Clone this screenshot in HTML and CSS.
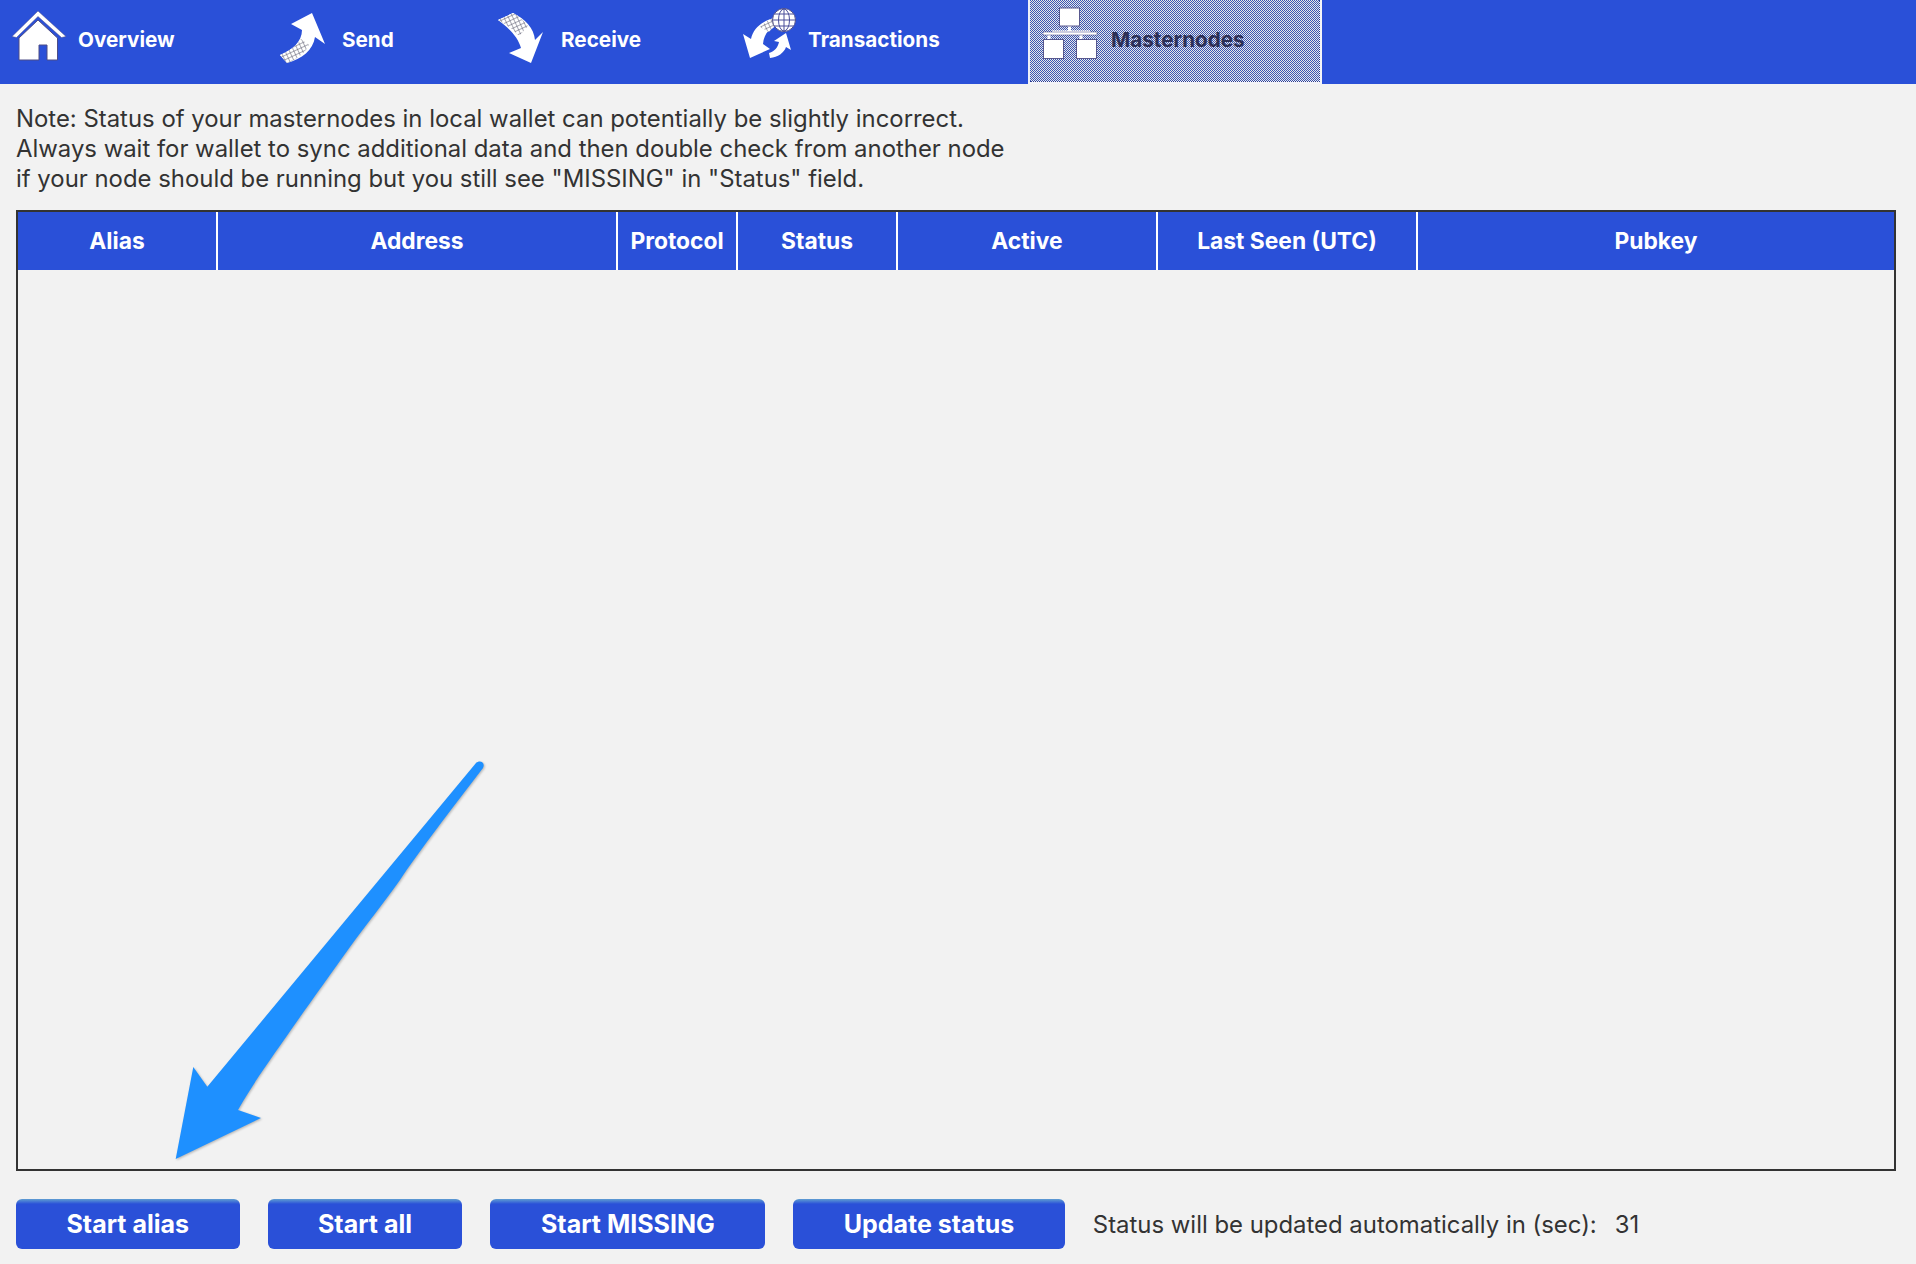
FILE: index.html
```html
<!DOCTYPE html>
<html lang="en">
<head>
<meta charset="utf-8">
<title>Masternodes</title>
<link rel="stylesheet" href="styles.css">
</head>
<body>
<svg width="0" height="0" class="defs">
  <defs>
    <pattern id="mesh" width="4" height="4" patternUnits="userSpaceOnUse" patternTransform="rotate(-25)">
      <rect width="4" height="4" fill="#fff"/>
      <path d="M0 0H4M0 0V4" stroke="#55556a" stroke-width="1"/>
    </pattern>
  </defs>
</svg>
<nav class="toolbar">
  <div class="tab">
    <svg class="icon icon-overview" viewBox="0 0 54 50">
      <path d="M26 0L54 25.5L49.5 26.5L26 5.5L4.500 26.500L0 25.500Z" fill="#fff" stroke="#4d4d86" stroke-width=".5"/>
      <path d="M26 9L45.500 27V49H35V34H27V49H7V27Z" fill="#fff" stroke="#4d4d86" stroke-width="1"/>
    </svg>
    <span>Overview</span>
  </div>
  <div class="tab">
    <svg class="icon icon-send" viewBox="0 0 50 50">
      <path d="M32 0L45 31L35 24C33 37 22 46 7 50L0 42C12 37 22 29 22 17L11 11Z" fill="#fff"/>
      <path d="M21 26L29 32C25 40 17 46 7 50L0 42C9 38 17 33 21 26Z" fill="url(#mesh)"/>
    </svg>
    <span>Send</span>
  </div>
  <div class="tab">
    <svg class="icon icon-receive" viewBox="0 0 52 50">
      <path d="M16 0C28 6 37 15 38 27L46 19L34 50L12 40L24 35C21 24 12 15 1 7Z" fill="#fff"/>
      <path d="M16 0C22 3 27 8 31 13L22 23C17 17 10 12 1 7Z" fill="url(#mesh)"/>
    </svg>
    <span>Receive</span>
  </div>
  <div class="tab">
    <svg class="icon icon-transactions" viewBox="0 0 53 52">
      <path d="M28 11C32 9 36 11 38 16C28 18 21 25 20 36L27 41L7 50L0 26L8 31C10 21 18 14 28 11Z" fill="#fff"/>
      <path d="M28 11C32 9 36 11 38 16C33 17 29 20 26 24L17 19C20 16 24 13 28 11Z" fill="url(#mesh)"/>
      <path d="M43 25L48 42L43 39C41 45 35 49 27 50L26 45C32 43 35 39 36 34L31 33Z" fill="#fff"/>
      <circle cx="41" cy="12" r="11.500" fill="#fff" stroke="#4d4d86"/>
      <g fill="none" stroke="#4a4f9a" stroke-width="1">
        <ellipse cx="41" cy="12" rx="5.500" ry="11"/>
        <path d="M41 1V23M30 12H52M31.500 6H50.500M31.500 18H50.500"/>
      </g>
    </svg>
    <span>Transactions</span>
  </div>
  <div class="tab tab-active">
    <svg class="icon icon-masternodes" viewBox="0 0 56 52">
      <path d="M26.500 19V25M9 25H47M6 28V33M38 28V33" stroke="#fff" stroke-width="3" fill="none"/>
      <path d="M0 25H54V28H0Z" fill="#fff" stroke="#58588e" stroke-width=".6"/>
      <rect x="16.500" y="1" width="20" height="18" fill="#fff" stroke="#58588e"/>
      <rect x="0.500" y="32.500" width="20" height="19" fill="#fff" stroke="#58588e"/>
      <rect x="33.500" y="32.500" width="20" height="19" fill="#fff" stroke="#58588e"/>
    </svg>
    <span>Masternodes</span>
  </div>
</nav>
<main class="content">
  <p class="note">Note: Status of your masternodes in local wallet can potentially be slightly incorrect.<br>Always wait for wallet to sync additional data and then double check from another node<br>if your node should be running but you still see "MISSING" in "Status" field.</p>
  <section class="table">
    <div class="thead">
      <div class="th">Alias</div>
      <div class="th">Address</div>
      <div class="th">Protocol</div>
      <div class="th">Status</div>
      <div class="th">Active</div>
      <div class="th">Last Seen (UTC)</div>
      <div class="th th-last">Pubkey</div>
    </div>
  </section>
  <div class="actions">
    <button class="btn" type="button">Start alias</button>
    <button class="btn" type="button">Start all</button>
    <button class="btn" type="button">Start MISSING</button>
    <button class="btn" type="button">Update status</button>
    <span class="status">Status will be updated automatically in (sec):</span>
    <span class="seconds">31</span>
  </div>
</main>
<svg class="callout" viewBox="0 0 1916 1264">
  <path d="M476 763C478 761 481 761 482.500 762.500C484 764 484 766 483 768C450 811 420 850 400 880C382 905 366 925 350 947C330 975 312 1000 293 1027C270 1060 252 1085 238 1110L261 1118L175.700 1159L193.300 1067L207.300 1086.700Z" fill="#1e90ff"/>
</svg>
</body>
</html>
```
FILE: styles.css
```css
* { box-sizing: border-box; }
html, body { margin: 0; padding: 0; }
body {
  position: relative;
  width: 1916px;
  height: 1264px;
  overflow: hidden;
  background: #f2f2f2;
  font-family: Inter, "Noto Sans", sans-serif;
  color: #333;
}
.defs { position: absolute; }
.toolbar {
  display: grid;
  grid-template-columns: 268px 217px 246px 297px 294px;
  height: 84px;
  background: #2a50d8;
}
.tab {
  display: flex;
  align-items: center;
  gap: 12px;
  padding-left: 12px;
  color: #fff;
  font-size: 20.700px;
  font-weight: 700;
  white-space: nowrap;
}
.tab span { position: relative; top: -3px; }
.icon { flex: none; display: block; }
.icon-overview { width: 54px; height: 50px; margin-top: -13px; }
.icon-send { width: 50px; height: 50px; margin-top: -8px; }
.icon-receive { width: 52px; height: 50px; margin-top: -8px; }
.icon-transactions { width: 53px; height: 52px; margin-top: -16px; }
.icon-masternodes { width: 56px; height: 52px; margin-top: -15px; }
.tab-active {
  position: relative;
  padding-left: 13px;
  gap: 12px;
  color: #2c2f55;
  background-color: #3a55b4;
  background-image: conic-gradient(#e8e8e8 25%, #3a55b4 0 50%, #e8e8e8 0 75%, #3a55b4 0);
  background-size: 2px 2px;
  border-left: 2px solid #eef0f8;
  border-right: 3px solid #f4f4f8;
  border-bottom: 3px solid #f4f4f8;
}
.tab-active span { top: -1px; }
.tab-active::after {
  content: "";
  position: absolute;
  top: 0;
  right: -1px;
  bottom: -1px;
  left: 0;
  border-right: 1px dotted #2a3c90;
  border-bottom: 1px dotted #2a3c90;
}
.content { padding: 20px 20px 0 16px; }
.note {
  margin: 0;
  font-size: 23.900px;
  line-height: 30px;
  white-space: nowrap;
}
.table {
  margin-top: 16px;
  height: 961px;
  border: 2px solid #333;
}
.thead {
  display: grid;
  grid-template-columns: 200px 400px 120px 160px 260px 260px 1fr;
  height: 58px;
  background: #2a50d8;
}
.th {
  display: flex;
  align-items: center;
  justify-content: center;
  padding-bottom: 1px;
  border-right: 2px solid #fff;
  color: #fff;
  font-size: 22.800px;
  font-weight: 700;
  white-space: nowrap;
}
.th-last { border-right: 0; }
.actions {
  display: flex;
  align-items: center;
  gap: 28px;
  margin-top: 28px;
  height: 50px;
}
.btn {
  height: 50px;
  padding: 0 50.500px;
  border: 0;
  border-radius: 6px;
  background: linear-gradient(#5f9ed2 0, #2a50d8 5px);
  color: #fff;
  font: 700 25px Inter, "Noto Sans", sans-serif;
  white-space: nowrap;
}
.status { font-size: 23.900px; }
.seconds { font-size: 23.900px; margin-left: -10px; }
.callout {
  position: absolute;
  left: 0;
  top: 0;
  width: 1916px;
  height: 1264px;
  pointer-events: none;
  filter: drop-shadow(1px 1px 1px rgba(0,0,0,.25));
}
```
